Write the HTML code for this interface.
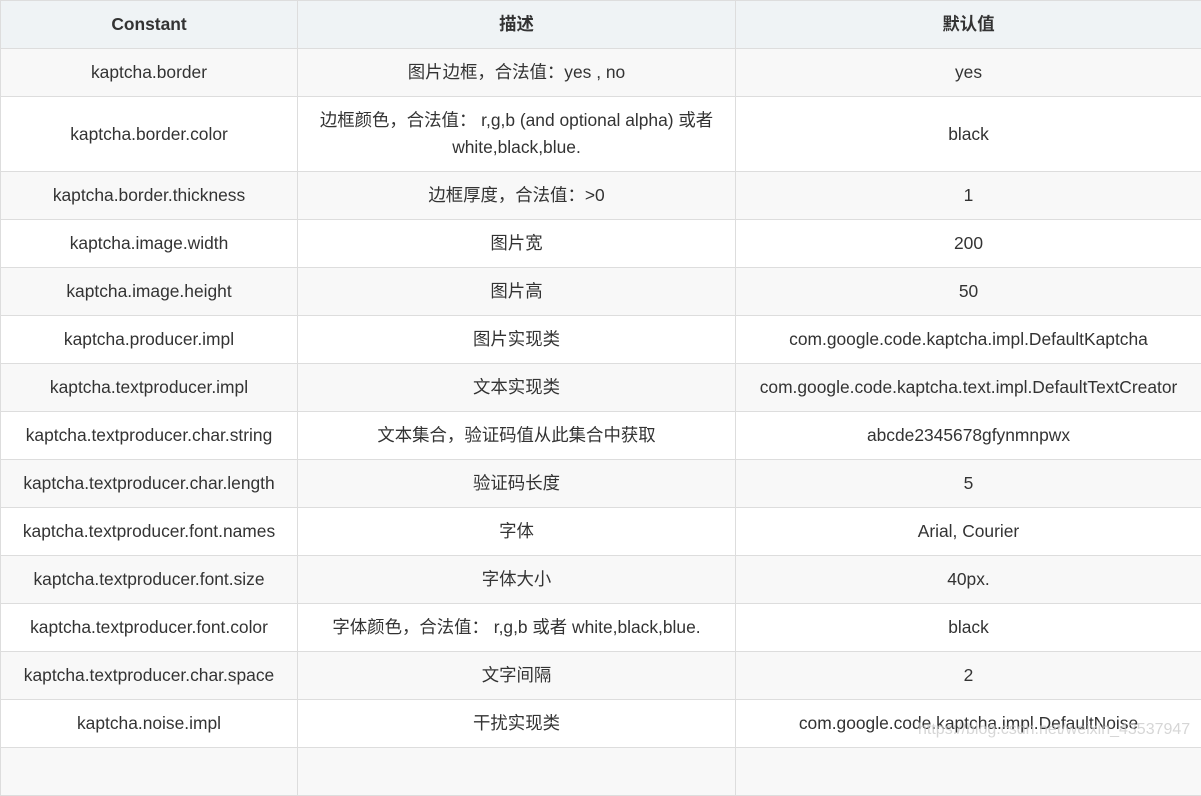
<!DOCTYPE html><html><head><meta charset="utf-8"><style>
body{margin:0;width:1201px;height:750px;overflow:hidden;background:#fff;font-family:"Liberation Sans","Noto Sans CJK SC",sans-serif;font-size:17.4px;color:#333}
table{border-collapse:collapse;position:absolute;left:0;top:0;width:1202px;table-layout:fixed}
td,th{border:1px solid #ddd;text-align:center;padding:1px 8px 1px;height:45px;line-height:27px}
th{background:#eff3f5;font-weight:bold;height:45px}
tr:nth-child(even) td{background:#f8f8f8}
.wm{position:absolute;left:918px;top:721px;color:rgba(200,200,200,.75);font-size:16px}
</style></head><body>
<table>
<colgroup><col style="width:297px"><col style="width:438px"><col style="width:466px"></colgroup>
<tr><th>Constant</th><th>描述</th><th>默认值</th></tr>
<tr><td>kaptcha.border</td><td>图片边框，合法值：yes , no</td><td>yes</td></tr>
<tr><td style="height:72px">kaptcha.border.color</td><td>边框颜色，合法值： r,g,b (and optional alpha) 或者 white,black,blue.</td><td>black</td></tr>
<tr><td>kaptcha.border.thickness</td><td>边框厚度，合法值：&gt;0</td><td>1</td></tr>
<tr><td>kaptcha.image.width</td><td>图片宽</td><td>200</td></tr>
<tr><td>kaptcha.image.height</td><td>图片高</td><td>50</td></tr>
<tr><td>kaptcha.producer.impl</td><td>图片实现类</td><td>com.google.code.kaptcha.impl.DefaultKaptcha</td></tr>
<tr><td>kaptcha.textproducer.impl</td><td>文本实现类</td><td>com.google.code.kaptcha.text.impl.DefaultTextCreator</td></tr>
<tr><td>kaptcha.textproducer.char.string</td><td>文本集合，验证码值从此集合中获取</td><td>abcde2345678gfynmnpwx</td></tr>
<tr><td>kaptcha.textproducer.char.length</td><td>验证码长度</td><td>5</td></tr>
<tr><td>kaptcha.textproducer.font.names</td><td>字体</td><td>Arial, Courier</td></tr>
<tr><td>kaptcha.textproducer.font.size</td><td>字体大小</td><td>40px.</td></tr>
<tr><td>kaptcha.textproducer.font.color</td><td>字体颜色，合法值： r,g,b 或者 white,black,blue.</td><td>black</td></tr>
<tr><td>kaptcha.textproducer.char.space</td><td>文字间隔</td><td>2</td></tr>
<tr><td>kaptcha.noise.impl</td><td>干扰实现类</td><td>com.google.code.kaptcha.impl.DefaultNoise</td></tr>
<tr><td></td><td></td><td></td></tr>
</table>
<div class="wm">https://blog.csdn.net/weixin_43537947</div>
</body></html>
